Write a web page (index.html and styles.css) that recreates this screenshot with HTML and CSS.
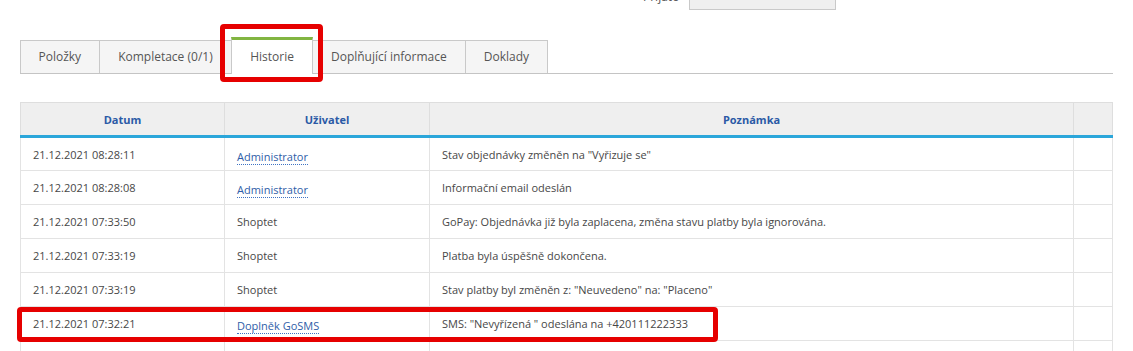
FILE: index.html
```html
<!DOCTYPE html>
<html lang="cs">
<head>
    <meta charset="UTF-8">
    <title>Historie objednávky</title>
    <link rel="stylesheet" href="styles.css">
</head>
<body>
    <div class="filter">
        <label class="filter-label">Přijato</label>
        <span class="filter-input"></span>
    </div>

    <ul class="tabs">
        <li class="tab">Položky</li>
        <li class="tab">Kompletace (0/1)</li>
        <li class="tab active">Historie</li>
        <li class="tab">Doplňující informace</li>
        <li class="tab">Doklady</li>
    </ul>

    <table class="history">
        <colgroup>
            <col class="col-date">
            <col class="col-user">
            <col class="col-note">
            <col class="col-extra">
        </colgroup>
        <thead>
            <tr>
                <th>Datum</th>
                <th>Uživatel</th>
                <th>Poznámka</th>
                <th></th>
            </tr>
        </thead>
        <tbody>
            <tr>
                <td>21.12.2021 08:28:11</td>
                <td><a href="#">Administrator</a></td>
                <td>Stav objednávky změněn na "Vyřizuje se"</td>
                <td></td>
            </tr>
            <tr>
                <td>21.12.2021 08:28:08</td>
                <td><a href="#">Administrator</a></td>
                <td>Informační email odeslán</td>
                <td></td>
            </tr>
            <tr>
                <td>21.12.2021 07:33:50</td>
                <td>Shoptet</td>
                <td>GoPay: Objednávka již byla zaplacena, změna stavu platby byla ignorována.</td>
                <td></td>
            </tr>
            <tr>
                <td>21.12.2021 07:33:19</td>
                <td>Shoptet</td>
                <td>Platba byla úspěšně dokončena.</td>
                <td></td>
            </tr>
            <tr>
                <td>21.12.2021 07:33:19</td>
                <td>Shoptet</td>
                <td>Stav platby byl změněn z: "Neuvedeno" na: "Placeno"</td>
                <td></td>
            </tr>
            <tr>
                <td>21.12.2021 07:32:21</td>
                <td><a href="#">Doplněk GoSMS</a></td>
                <td>SMS: "Nevyřízená " odeslána na +420111222333</td>
                <td></td>
            </tr>
            <tr>
                <td>&nbsp;</td>
                <td></td>
                <td></td>
                <td></td>
            </tr>
        </tbody>
    </table>

    <!--červené zvýraznění-->
    <div class="mark mark-tab"></div>
    <div class="mark mark-row"></div>
</body>
</html>
```

FILE: styles.css
```css
*{
    padding: 0;
    margin: 0;
    list-style: none;
    box-sizing: border-box;
}
body{
    position: relative;
    width: 1133px;
    height: 351px;
    overflow: hidden;
    font-family: "Open Sans", "Liberation Sans", sans-serif;
    font-size: 11px;
    color: #474747;
    background: #fff;
    padding-left: 20px;
}
.filter{
    display: flex;
    align-items: flex-end;
    gap: 10px;
    height: 10px;
    margin-left: 623px;
}
.filter-label{
    font-size: 12px;
    line-height: 12px;
    color: #555;
    margin-bottom: 7px;
}
.filter-input{
    display: block;
    width: 147px;
    height: 20px;
    background: #efefef;
    border: 1px solid #c9c9c9;
}
.tabs{
    display: flex;
    align-items: flex-end;
    margin-top: 28px;
    width: 1093px;
    height: 36px;
    border-bottom: 1px solid #c4c4c4;
}
.tab{
    height: 33px;
    line-height: 32px;
    padding: 0 18px;
    font-size: 12px;
    color: #555;
    background: #f5f5f5;
    border: 1px solid #c9c9c9;
    border-left: 0;
    border-bottom: 0;
}
.tab:first-child{
    padding: 0 17.5px;
    border-left: 1px solid #c9c9c9;
}
.tab:nth-child(2){
    padding: 0 18.5px;
}
.tab.active{
    height: 37px;
    line-height: 33px;
    margin-bottom: -1px;
    background: #fff;
    border-top: 3px solid #82b541;
    border-left: 1px solid #c9c9c9;
    margin-left: -1px;
}
.history{
    margin-top: 28px;
    width: 1093px;
    border-collapse: collapse;
    table-layout: fixed;
    border: 1px solid #dedede;
}
.col-date{
    width: 204px;
}
.col-user{
    width: 205px;
}
.col-extra{
    width: 39px;
}
.history th{
    height: 34px;
    background: #efefef;
    color: #2b5aa6;
    font-weight: bold;
    font-size: 11px;
    text-align: center;
    border-left: 1px solid #dedede;
    border-bottom: 3px solid #2ba6da;
}
.history td{
    height: 34px;
    padding: 0 12px;
    border: 1px solid #e3e3e3;
    white-space: nowrap;
}
.history a{
    position: relative;
    top: 2px;
    color: #2f5ea8;
    text-decoration: none;
    border-bottom: 1px dotted #3f73c4;
}
.mark{
    position: absolute;
    border: 5px solid #e60000;
    border-radius: 4px;
}
.mark-tab{
    left: 220px;
    top: 24px;
    width: 103px;
    height: 58px;
}
.mark-row{
    left: 17px;
    top: 307px;
    width: 701px;
    height: 35px;
}
```
